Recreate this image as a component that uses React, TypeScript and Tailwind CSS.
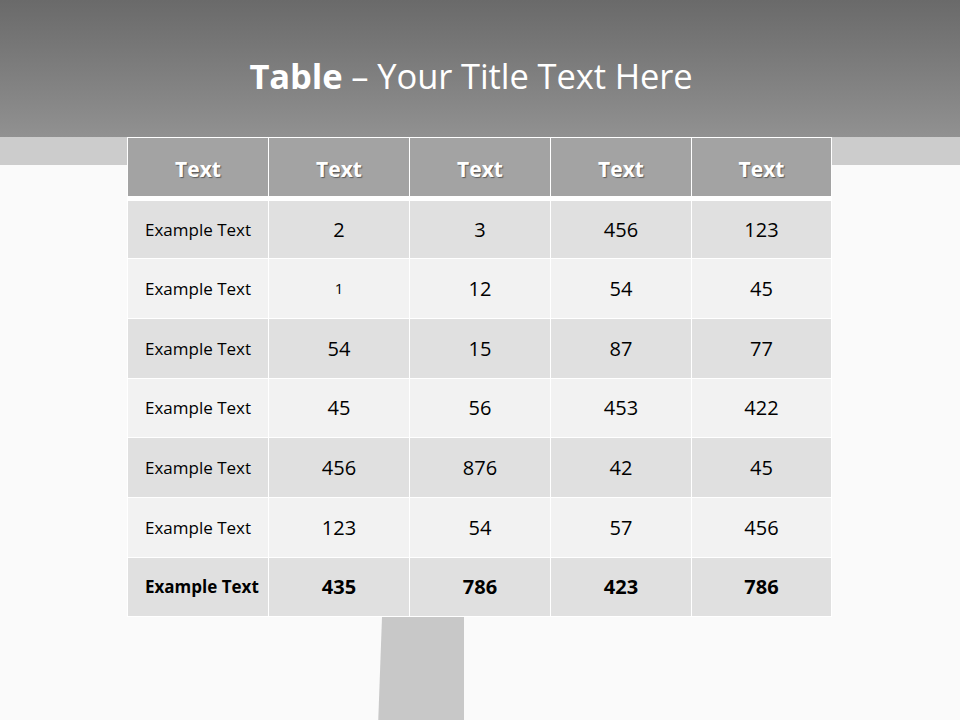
const rows: string[][] = [
  ["Example Text", "2", "3", "456", "123"],
  ["Example Text", "1", "12", "54", "45"],
  ["Example Text", "54", "15", "87", "77"],
  ["Example Text", "45", "56", "453", "422"],
  ["Example Text", "456", "876", "42", "45"],
  ["Example Text", "123", "54", "57", "456"],
  ["Example Text", "435", "786", "423", "786"],
];

const heights = ["h-[57px]", "h-[59px]", "h-[59px]", "h-[58px]", "h-[59px]", "h-[59px]", "h-[58px]"];

export default function App() {
  return (
    <div className="w-[960px] h-[720px] overflow-hidden bg-[#fafafa] font-['Open_Sans',sans-serif]">
      <div className="h-[137px] bg-gradient-to-b from-[#6a6a6a] to-[#919191] flex items-center justify-center pt-[14px] pr-[18px]">
        <h1 className="text-[34.5px] text-white tracking-[-0.1px]">
          <span className="font-bold">Table</span> – Your Title Text Here
        </h1>
      </div>
      <div className="h-[28px] bg-[#cccccc]" />
      <div className="-mt-[28px] ml-[127px] w-[705px] border border-white bg-white">
        <div className="grid grid-cols-[140px_140px_140px_140px_139px] gap-x-px h-[58px] bg-white">
          {["Text", "Text", "Text", "Text", "Text"].map((t, i) => (
            <div
              key={i}
              className="bg-[#a3a3a3] flex items-center justify-center pt-[5px] text-white font-bold text-[21px] [text-shadow:1px_1px_1px_rgba(0,0,0,0.45)]"
            >
              {t}
            </div>
          ))}
        </div>
        <div className="h-[4px]" />
        {rows.map((r, ri) => (
          <div
            key={ri}
            className={"grid grid-cols-[140px_140px_140px_140px_139px] gap-x-px mt-px first:mt-0 " + heights[ri]}
          >
            {r.map((c, ci) => (
              <div
                key={ci}
                className={
                  (ri % 2 === 0 ? "bg-[#e0e0e0] " : "bg-[#f2f2f2] ") +
                  (ci === 0
                    ? "flex items-center pl-[17px] text-[17px] text-black "
                    : "flex items-center justify-center text-black " +
                      (ri === 1 && ci === 1 ? "text-[15px] " : "text-[20px] ")) +
                  (ri === rows.length - 1 ? "font-bold" : "")
                }
              >
                {c}
              </div>
            ))}
          </div>
        ))}
      </div>
      <div className="ml-[378px] w-[86px] h-[110px] bg-[#c8c8c8] [clip-path:polygon(4px_0,100%_0,100%_100%,0_100%)]" />
    </div>
  );
}
